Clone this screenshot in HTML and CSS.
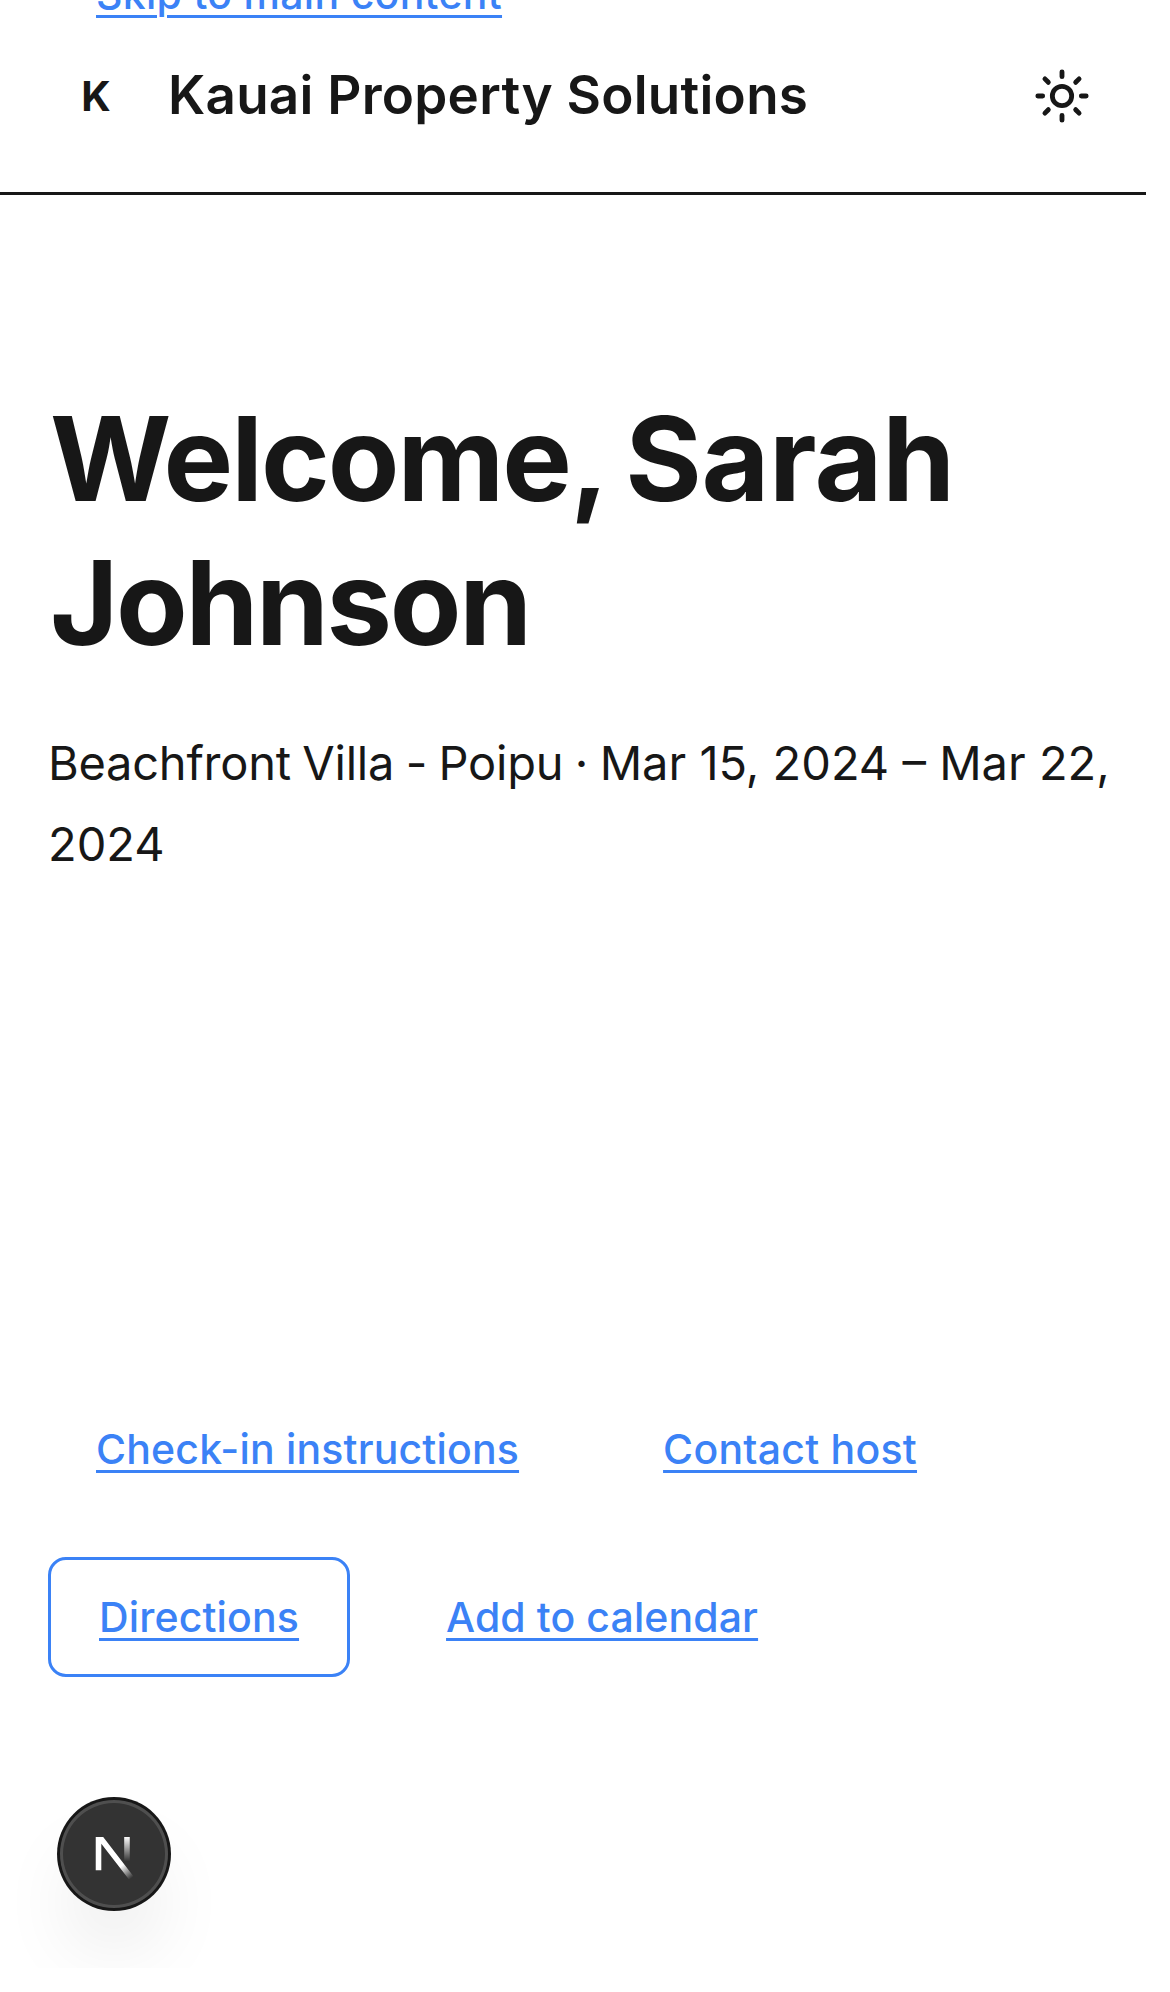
FILE: index.html
```
<!DOCTYPE html>
<html lang="en">
<head>
<meta charset="utf-8">
<title>Kauai Property Solutions</title>
<link rel="stylesheet" href="styles.css">
</head>
<body>
<div class="screen">
  <a class="skip-link" href="#main">Skip to main content</a>
  <header class="header">
    <span class="brand-mark">K</span>
    <span class="brand-name">Kauai Property Solutions</span>
    <svg class="theme-icon" viewBox="0 0 24 24" fill="none" stroke="currentColor" stroke-width="2" stroke-linecap="round" stroke-linejoin="round" role="img" aria-label="Toggle theme">
      <circle cx="12" cy="12" r="4"/>
      <path d="M12 2v2M12 20v2M4.93 4.93l1.41 1.41M17.66 17.66l1.41 1.41M2 12h2M20 12h2M6.34 17.66l-1.41 1.41M19.07 4.93l-1.41 1.41"/>
    </svg>
  </header>
  <main id="main">
    <section class="hero">
      <h1 class="title">Welcome, <span class="first-name">Sarah</span> <span class="last-name">Johnson</span></h1>
      <p class="stay"><span class="property">Beachfront Villa - Poipu · </span>Mar 15, 2024 – Mar 22, 2024</p>
    </section>
    <nav class="actions">
      <a class="action" href="#checkin">Check-in instructions</a>
      <a class="action action-contact" href="#contact">Contact host</a>
      <a class="action action-outline" href="#directions">Directions</a>
      <a class="action action-calendar" href="#calendar">Add to calendar</a>
    </nav>
  </main>
  <div class="dev-badge">
    <svg class="dev-logo" viewBox="0 0 40 40" fill="none">
      <defs>
        <linearGradient id="diagonal" x1="9.956" y1="11.123" x2="15.478" y2="17.967" gradientUnits="userSpaceOnUse">
          <stop stop-color="#fff"/><stop offset=".604" stop-color="#fff" stop-opacity="0"/>
        </linearGradient>
        <linearGradient id="stem" x1="11.822" y1="1.4" x2="11.793" y2="9.625" gradientUnits="userSpaceOnUse">
          <stop stop-color="#fff"/><stop offset="1" stop-color="#fff" stop-opacity="0"/>
        </linearGradient>
        <clipPath id="bounds"><rect x="1" y="1.5" width="15" height="16"/></clipPath>
      </defs>
      <g transform="translate(10.5 10.83)" stroke-width="1.86">
        <path d="M13.3 15.2L2.34 1V12.6" stroke="url(#diagonal)" clip-path="url(#bounds)"/>
        <path d="M11.825 1.5V13.1" stroke="url(#stem)"/>
      </g>
    </svg>
  </div>
</div>
</body>
</html>
```
FILE: styles.css
```
* {
  box-sizing: border-box;
}

body {
  margin: 0;
  background: #fff;
  color: #171717;
  font-family: Inter, "Liberation Sans", sans-serif;
}

.screen {
  position: relative;
  width: 1146px;
  height: 1968px;
  overflow: hidden;
}

a {
  color: #3b82f6;
  font-size: 41px;
  font-weight: 500;
  line-height: 60px;
  text-decoration: underline;
  text-decoration-thickness: 3px;
  text-underline-offset: 6px;
}

.skip-link {
  position: absolute;
  top: -36px;
  left: 96px;
  letter-spacing: 0.29px;
}

.header {
  display: flex;
  align-items: center;
  height: 195px;
  padding: 0 55px 0 48px;
  border-bottom: 3px solid #171717;
}

.brand-mark {
  width: 96px;
  margin-right: 24px;
  font-size: 41px;
  font-weight: 700;
  line-height: 60px;
  text-align: center;
}

.brand-name {
  padding-bottom: 2px;
  font-size: 53px;
  font-weight: 600;
  line-height: 72px;
  letter-spacing: 0.24px;
}

.theme-icon {
  width: 58px;
  height: 58px;
  margin-left: auto;
}

.hero {
  height: 1194px;
  padding: 192px 24px 0 48px;
}

.title {
  margin: 0 0 47px;
  padding-left: 2px;
  font-size: 117px;
  font-weight: 700;
  line-height: 144px;
  letter-spacing: -2px;
  word-spacing: -4px;
}

.first-name {
  letter-spacing: -0.4px;
}

.last-name {
  letter-spacing: -2.3px;
}

.stay {
  margin: 0;
  font-size: 47px;
  line-height: 81px;
}

.property {
  letter-spacing: -0.25px;
  word-spacing: -1.4px;
}

.actions {
  display: flex;
  flex-wrap: wrap;
  gap: 48px;
  padding: 0 48px;
}

.action {
  height: 120px;
  padding: 30px 48px;
  letter-spacing: 0.18px;
}

.action-contact {
  letter-spacing: 0.25px;
}

.action-outline {
  padding: 27px 48px;
  border: 3px solid #3b82f6;
  border-radius: 18px;
  letter-spacing: 0.15px;
}

.action-calendar {
  letter-spacing: 0.1px;
}

.dev-badge {
  position: absolute;
  top: 1800px;
  left: 60px;
  width: 108px;
  height: 108px;
  border-radius: 50%;
  background: #333;
  box-shadow: 0 0 0 3px #171717, inset 0 0 0 3px rgba(255, 255, 255, 0.14), 0 48px 84px -24px rgba(0, 0, 0, 0.2);
}

.dev-logo {
  display: block;
  width: 120px;
  height: 120px;
}
```
